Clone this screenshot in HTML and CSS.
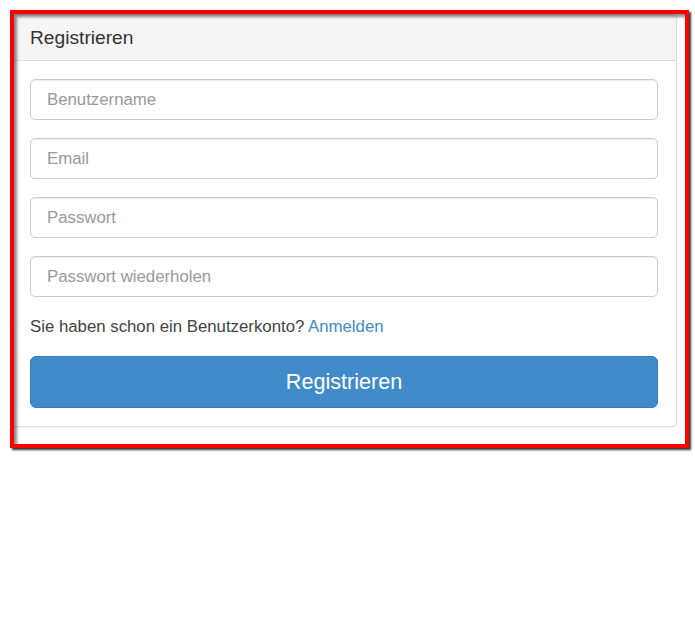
FILE: index.html
```html
<!DOCTYPE html>
<html lang="de">
<head>
    <meta charset="UTF-8">
    <meta name="viewport" content="width=device-width, initial-scale=1.0">
    <link rel="stylesheet" href="styles.css">
</head>
<body>
    <div class="page">
        <!-- Registrierungs-Panel -->
        <div class="panel">
            <div class="panel-heading">
                <h3 class="panel-title">Registrieren</h3>
            </div>
            <div class="panel-body">
                <form class="register-form" onsubmit="return false">
                    <div class="form-group">
                        <input type="text" class="form-control" placeholder="Benutzername">
                    </div>
                    <div class="form-group">
                        <input type="email" class="form-control" placeholder="Email">
                    </div>
                    <div class="form-group">
                        <input type="password" class="form-control" placeholder="Passwort">
                    </div>
                    <div class="form-group">
                        <input type="password" class="form-control" placeholder="Passwort wiederholen">
                    </div>
                    <p class="form-group login-hint">Sie haben schon ein Benutzerkonto? <a href="#">Anmelden</a></p>
                    <button type="submit" class="btn-primary">Registrieren</button>
                </form>
            </div>
        </div>

        <!-- roter Markierungsrahmen -->
        <div class="highlight"></div>
    </div>
</body>
</html>
```

FILE: styles.css
```css
/* Grundlayout */
body {
    margin: 0;
    padding: 0;
    background-color: #fff;
    font-family: "Liberation Sans", Arial, sans-serif;
    font-size: 16.8px;
    color: #444;
}

.page {
    position: relative;
    padding: 14px 18px 30px 11px;
    width: 666px;
}

/* Panel */
.panel {
    background-color: #fff;
    border: 1px solid #ddd;
    border-radius: 5px;
    box-shadow: 0 1px 1px rgba(0, 0, 0, 0.05);
}

.panel-heading {
    background-color: #f5f5f5;
    border-bottom: 1px solid #ddd;
    border-radius: 4px 4px 0 0;
    padding: 12px 18px;
}

.panel-title {
    margin: 0;
    font-size: 19.2px;
    font-weight: normal;
    line-height: 21px;
    color: #333;
}

.panel-body {
    padding: 18px;
}

/* Formular */
.form-group {
    margin: 0 0 18px;
}

.form-control {
    display: block;
    box-sizing: border-box;
    width: 100%;
    height: 41px;
    padding: 7px 16px;
    font-family: inherit;
    font-size: 16.8px;
    color: #555;
    background-color: #fff;
    border: 1px solid #ccc;
    border-radius: 5px;
    box-shadow: inset 0 1px 1px rgba(0, 0, 0, 0.075);
    outline: none;
}

.form-control::placeholder {
    color: #999;
}

.login-hint {
    line-height: 23px;
}

.login-hint a {
    color: #428bca;
    text-decoration: none;
}

.btn-primary {
    display: block;
    box-sizing: border-box;
    width: 100%;
    height: 52px;
    padding: 0 19px;
    font-family: inherit;
    font-size: 21.6px;
    color: #fff;
    background-color: #428bca;
    border: 1px solid #357ebd;
    border-radius: 6px;
    cursor: pointer;
}

/* roter Rahmen über dem Panel */
.highlight {
    position: absolute;
    left: 10px;
    top: 10px;
    width: 671px;
    height: 430px;
    border: 4px solid #f00;
    box-shadow: 2px 2px 2px #333, inset 3px 3px 3px rgba(0, 0, 0, 0.45);
    pointer-events: none;
}
```
